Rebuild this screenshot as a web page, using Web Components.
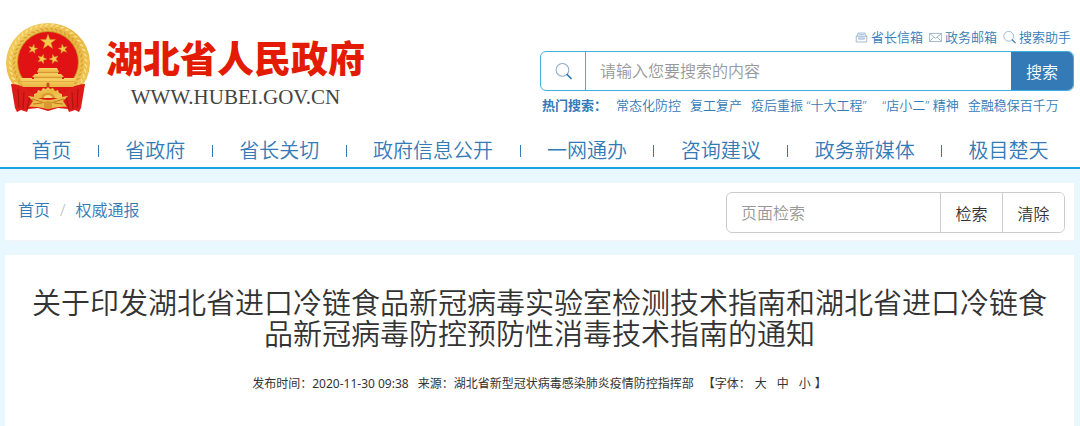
<!DOCTYPE html>
<html lang="zh-CN">
<head>
  <meta charset="utf-8">
  <meta name="viewport" content="width=device-width, initial-scale=1">
  <title>湖北省人民政府</title>
  <style>
    body {
      margin: 0;
      background: #e9f7fe;
      color: #333;
      font-family: "Noto Sans", "Noto Sans CJK SC", sans-serif;
      font-size: 16px;
      font-weight: 350;
      --link: #337ab7;
      --line: #41b0e0;
    }
    a {
      color: var(--link);
      text-decoration: none;
    }
    main {
      display: flex;
      flex-direction: column;
      gap: 14px;
      padding: 14px 6px 0 5px;
    }
  </style>
</head>
<body>
  <site-header>
    <site-brand slot="brand" data-url="WWW.HUBEI.GOV.CN">湖北省人民政府</site-brand>
    <quick-link slot="links" data-icon="box" data-href="#mailbox">省长信箱</quick-link>
    <quick-link slot="links" data-icon="mail" data-href="#mail">政务邮箱</quick-link>
    <quick-link slot="links" data-icon="search" data-href="#helper">搜索助手</quick-link>
    <site-search slot="search" data-placeholder="请输入您要搜索的内容">搜索</site-search>
    <hot-words slot="hot" data-label="热门搜索：">
      <a href="#w1">常态化防控</a>
      <a href="#w2">复工复产</a>
      <a href="#w3">疫后重振 “十大工程”</a>
      <a href="#w4">&nbsp;&nbsp;“店小二” 精神</a>
      <a href="#w5">金融稳保百千万</a>
    </hot-words>
  </site-header>

  <site-nav>
    <nav-item data-href="#home">首页</nav-item>
    <nav-item data-href="#gov">省政府</nav-item>
    <nav-item data-href="#governor">省长关切</nav-item>
    <nav-item data-href="#info">政府信息公开</nav-item>
    <nav-item data-href="#service">一网通办</nav-item>
    <nav-item data-href="#advice">咨询建议</nav-item>
    <nav-item data-href="#media">政务新媒体</nav-item>
    <nav-item data-href="#chutian">极目楚天</nav-item>
  </site-nav>

  <main>
    <crumb-bar>
      <a href="#home">首页</a>
      <a href="#notice">权威通报</a>
      <page-finder slot="tools" data-placeholder="页面检索"></page-finder>
    </crumb-bar>
    <article-head>
      关于印发湖北省进口冷链食品新冠病毒实验室检测技术指南和湖北省进口冷链食品新冠病毒防控预防性消毒技术指南的通知
      <span slot="meta">发布时间：2020-11-30 09:38</span>
      <span slot="meta">来源：湖北省新型冠状病毒感染肺炎疫情防控指挥部</span>
      <font-sizer slot="meta"></font-sizer>
    </article-head>
  </main>

  <script>
    const icons = {
      box: `
        <path d="M3.500 5.500v-3h9v3M1.500 6.500h13v7h-13z"/>
        <path d="M1.500 6.500l2-2M14.500 6.500l-2-2M5 4.500h6M4.500 8.500h7v1.500h-7z"/>`,
      mail: `
        <path d="M.5 3h15v10h-15z"/>
        <path d="M.5 3L8 9l7.500-6M.5 13L6 7.500M15.500 13L10 7.500"/>`,
      search: `
        <circle cx="7" cy="6.500" r="6"/>
        <path d="M11 10.500l4.500 4.500" stroke="#337ab7" stroke-width="1.500"/>`
    };

    function icon(name, size) {
      return `<svg width="${size}" height="${size}" viewBox="0 0 16 16" fill="none" stroke="#8eabcd" aria-hidden="true">${icons[name]}</svg>`;
    }

    function star(cx, cy, r, turn = 0) {
      const points = [];
      for (let i = 0; i < 10; i++) {
        const angle = (i * 36 - 90 + turn) * Math.PI / 180;
        const len = i % 2 ? r * 0.4 : r;
        points.push(`${(cx + len * Math.cos(angle)).toFixed(2)},${(cy + len * Math.sin(angle)).toFixed(2)}`);
      }
      return `<polygon points="${points.join(' ')}"/>`;
    }

    // grains of the wheat wreath, left out at the bottom where the ribbon is
    function grains() {
      let out = '';
      for (let a = 140; a <= 400; a += 8) {
        const rad = a * Math.PI / 180;
        for (const [r, tilt, fill] of [[38, 55, '#f8e08e'], [34, 125, '#d9a238']]) {
          const x = (42 + r * Math.cos(rad)).toFixed(1);
          const y = (40 + r * Math.sin(rad)).toFixed(1);
          out += `<ellipse cx="${x}" cy="${y}" rx="2.200" ry=".8" fill="${fill}" transform="rotate(${a + tilt} ${x} ${y})"/>`;
        }
      }
      return out;
    }

    class GovEmblem extends HTMLElement {
      constructor() {
        super();
        this.attachShadow({ mode: 'open' });
      }

      connectedCallback() {
        this.shadowRoot.innerHTML = `
          <style>
            :host { display: block; flex: none; }
            svg { display: block; }
          </style>
          <svg width="84" height="89" viewBox="0 0 84 89" role="img" aria-label="国徽">
            <defs>
              <linearGradient id="gold" x1="0" y1="0" x2="1" y2="1">
                <stop offset="0" stop-color="#f5d368"/>
                <stop offset=".5" stop-color="#e8b741"/>
                <stop offset="1" stop-color="#f3cb5c"/>
              </linearGradient>
              <linearGradient id="wall" x1="0" y1="0" x2="0" y2="1">
                <stop offset="0" stop-color="#f9d468"/>
                <stop offset="1" stop-color="#eab542"/>
              </linearGradient>
            </defs>
            <ellipse cx="42" cy="40" rx="42" ry="40" fill="url(#gold)"/>
            ${grains()}
            <circle cx="42" cy="39" r="31" fill="#cf9126"/>
            <circle cx="42" cy="39" r="30" fill="#e01214"/>
            <g fill="#f6c94e" stroke="#cf8b1d" stroke-width=".4">
              ${star(42, 19, 8)}
              ${star(27, 26, 5, 12)}
              ${star(57, 26, 5, -12)}
              ${star(36, 36, 5, 18)}
              ${star(48, 36, 5, -18)}
            </g>
            <g fill="url(#wall)">
              <path d="M33 45h18l2 4H31z"/>
              <path d="M32 49h20v3H32z"/>
              <path d="M29 51h26l3 3H26z"/>
              <path d="M28 54h28v4H28z"/>
              <path d="M14 55h12v1h32v-1h12l-3 9H17z"/>
            </g>
            <path d="M31 49.500h22M27 54.500h30" stroke="#bd761a" stroke-width=".6"/>
            <path d="M15 58.500h54" stroke="#d69a30" stroke-width=".6"/>
            <path d="M40.500 64v-3a1.500 1.500 0 0 1 3 0v3z" fill="#c4521a"/>
            <path d="M16 64h52l-6 8-10 4H32l-10-4z" fill="#dc1716"/>
            <path d="M5 61c10 0 17 5 24 11l-2 9c-3 2-5 5-6 8l-6-2-4 2-2-4z" fill="#dd1b18"/>
            <path d="M79 61c-10 0-17 5-24 11l2 9c3 2 5 5 6 8l6-2 4 2 2-4z" fill="#dd1b18"/>
            <path d="M12 66l1 19M18 69l-1 17M24 73l-3 13M72 66l-1 19M66 69l1 17M60 73l3 13" stroke="#a51414"/>
            <path d="M28 71l3-1 1-3 3 1 2-3 3 1 2-2 2 2 3-1 2 3 3-1 1 3 3 1v4H28z" fill="url(#gold)"/>
            <path d="M35 75a7 5 0 0 1 14 0z" fill="#d89a30"/>
            <path d="M38 75a4 3 0 0 1 8 0z" fill="#f7d878"/>
            <path d="M22 86l5-10h30l5 10-10-1-10 3-10-3z" fill="#dc1917"/>
            <path d="M22 73c7 0 13 4 20 4s13-4 20-4l-5 5 4 6c-7-1-12 1-19 2-7-1-12-3-19-2l4-6z" fill="#ecbc4a"/>
            <path d="M26 76c5 1 10 4 16 4s11-3 16-4M27 81l9-1M57 81l-9-1" fill="none" stroke="#bf781d"/>
            <path d="M38 79l4-1 4 1v6l-4 1-4-1z" fill="#d89a30"/>
          </svg>
        `;
      }
    }

    class SiteBrand extends HTMLElement {
      constructor() {
        super();
        this.attachShadow({ mode: 'open' });
      }

      connectedCallback() {
        const url = this.getAttribute('data-url');

        this.shadowRoot.innerHTML = `
          <style>
            :host {
              display: flex;
              align-items: flex-start;
              gap: 16px;
            }
            .text {
              display: flex;
              flex-direction: column;
              align-items: center;
              padding-top: 14px;
            }
            h1 {
              margin: 0;
              color: #e31b00;
              font-size: 37px;
              font-weight: 900;
              line-height: 44px;
              white-space: nowrap;
            }
            .url {
              color: #444;
              font-family: "Liberation Serif", serif;
              font-size: 21px;
              font-weight: 400;
              line-height: 32px;
            }
          </style>
          <gov-emblem></gov-emblem>
          <div class="text">
            <h1><slot></slot></h1>
            <span class="url">${url}</span>
          </div>
        `;
      }
    }

    class SiteHeader extends HTMLElement {
      constructor() {
        super();
        this.attachShadow({ mode: 'open' });
      }

      connectedCallback() {
        this.shadowRoot.innerHTML = `
          <style>
            :host {
              display: block;
              background: #fff;
            }
            header {
              display: flex;
              justify-content: space-between;
              padding: 23px 6px 0;
            }
            .side {
              flex: 0 0 50%;
              display: flex;
              flex-direction: column;
              gap: 4px;
              padding-top: 4px;
            }
            .links {
              display: flex;
              justify-content: flex-end;
              gap: 6px;
              padding-right: 3px;
            }
          </style>
          <header>
            <slot name="brand"></slot>
            <div class="side">
              <div class="links"><slot name="links"></slot></div>
              <slot name="search"></slot>
              <slot name="hot"></slot>
            </div>
          </header>
        `;
      }
    }

    class QuickLink extends HTMLElement {
      constructor() {
        super();
        this.attachShadow({ mode: 'open' });
      }

      connectedCallback() {
        this.shadowRoot.innerHTML = `
          <style>
            :host { display: block; }
            a {
              display: flex;
              align-items: center;
              gap: 3px;
              color: var(--link);
              font-size: 13px;
              line-height: 20px;
              text-decoration: none;
            }
          </style>
          <a href="${this.getAttribute('data-href')}">${icon(this.getAttribute('data-icon'), 13)}<slot></slot></a>
        `;
      }
    }

    class SiteSearch extends HTMLElement {
      constructor() {
        super();
        this.attachShadow({ mode: 'open' });
      }

      connectedCallback() {
        const placeholder = this.getAttribute('data-placeholder');

        this.shadowRoot.innerHTML = `
          <style>
            :host { display: block; }
            form {
              display: flex;
              height: 40px;
              border: 1px solid var(--line);
              border-radius: 6px;
              box-sizing: border-box;
              overflow: hidden;
            }
            label {
              display: grid;
              place-items: center;
              width: 44px;
              border-right: 1px solid var(--line);
            }
            input {
              flex: 1;
              width: 0;
              border: 0;
              padding: 0 14px;
              background: none;
              color: #555;
              font: inherit;
              outline: none;
            }
            input::placeholder { color: #999; }
            button {
              width: 62px;
              border: 0;
              padding: 0;
              background: var(--link);
              color: #fff;
              font: inherit;
            }
          </style>
          <form>
            <label for="q">${icon('search', 17)}</label>
            <input id="q" type="text" aria-label="${placeholder}" placeholder="${placeholder}">
            <button type="button"><slot></slot></button>
          </form>
        `;
      }
    }

    class HotWords extends HTMLElement {
      constructor() {
        super();
        this.attachShadow({ mode: 'open' });
      }

      connectedCallback() {
        this.shadowRoot.innerHTML = `
          <style>
            :host {
              display: flex;
              gap: 9px;
              padding: 0 2px;
              color: var(--link);
              font-size: 13px;
              line-height: 20px;
              white-space: nowrap;
            }
            b { font-weight: 700; }
          </style>
          <b>${this.getAttribute('data-label')}</b>
          <slot></slot>
        `;
      }
    }

    class SiteNav extends HTMLElement {
      constructor() {
        super();
        this.attachShadow({ mode: 'open' });
      }

      connectedCallback() {
        this.shadowRoot.innerHTML = `
          <style>
            :host {
              display: block;
              border-bottom: 2px solid #1ba1e2;
              background: #fff;
            }
            nav {
              display: flex;
              padding: 22px 5px 2px;
            }
          </style>
          <nav><slot></slot></nav>
        `;
      }
    }

    class NavItem extends HTMLElement {
      constructor() {
        super();
        this.attachShadow({ mode: 'open' });
      }

      connectedCallback() {
        this.shadowRoot.innerHTML = `
          <style>
            :host {
              flex: 1 1 auto;
              display: flex;
              align-items: center;
            }
            :host(:not(:first-child))::before {
              content: "";
              width: 1px;
              height: 12px;
              background: var(--link);
            }
            a {
              flex: 1;
              color: var(--link);
              font-size: 20px;
              line-height: 28px;
              text-align: center;
              text-decoration: none;
              white-space: nowrap;
            }
          </style>
          <a href="${this.getAttribute('data-href')}"><slot></slot></a>
        `;
      }
    }

    class CrumbBar extends HTMLElement {
      constructor() {
        super();
        this.attachShadow({ mode: 'open' });
      }

      connectedCallback() {
        this.shadowRoot.innerHTML = `
          <style>
            :host {
              display: flex;
              justify-content: space-between;
              align-items: flex-start;
              border-bottom: 1px solid #f3f3f3;
              padding: 9px 9px 7px 13px;
              background: #fff;
            }
            nav {
              display: flex;
              padding-top: 6px;
              line-height: 24px;
            }
            ::slotted(a:not(:first-child))::before {
              content: "/";
              padding: 0 10px;
              color: #bbb;
            }
          </style>
          <nav><slot></slot></nav>
          <slot name="tools"></slot>
        `;
      }
    }

    class PageFinder extends HTMLElement {
      constructor() {
        super();
        this.attachShadow({ mode: 'open' });
      }

      connectedCallback() {
        const placeholder = this.getAttribute('data-placeholder');

        this.shadowRoot.innerHTML = `
          <style>
            :host { display: block; flex: 0 1 339px; }
            form {
              display: flex;
              height: 41px;
              border: 1px solid #ccc;
              border-radius: 6px;
              box-sizing: border-box;
              overflow: hidden;
            }
            input {
              flex: 1;
              width: 0;
              border: 0;
              padding: 0 14px;
              background: none;
              font: inherit;
              outline: none;
            }
            input::placeholder { color: #999; }
            button {
              width: 62px;
              border: 0;
              border-left: 1px solid #ccc;
              padding: 0;
              background: #fff;
              color: #333;
              font: inherit;
            }
          </style>
          <form>
            <input type="text" aria-label="${placeholder}" placeholder="${placeholder}">
            <button type="button">检索</button>
            <button type="reset">清除</button>
          </form>
        `;
      }
    }

    class ArticleHead extends HTMLElement {
      constructor() {
        super();
        this.attachShadow({ mode: 'open' });
      }

      connectedCallback() {
        this.shadowRoot.innerHTML = `
          <style>
            :host {
              display: block;
              padding: 32px 20px 48px;
              background: #fff;
            }
            h2 {
              margin: 0;
              font-size: 29px;
              font-weight: inherit;
              line-height: 31px;
              text-align: center;
            }
            .meta {
              display: flex;
              justify-content: center;
              gap: 9px;
              padding-top: 25px;
              font-size: 12px;
              font-weight: 400;
              line-height: 20px;
            }
          </style>
          <h2><slot></slot></h2>
          <div class="meta"><slot name="meta"></slot></div>
        `;
      }
    }

    class FontSizer extends HTMLElement {
      constructor() {
        super();
        this.attachShadow({ mode: 'open' });
      }

      connectedCallback() {
        this.shadowRoot.innerHTML = `
          <style>
            :host { display: flex; }
            div { display: flex; gap: 10px; padding: 0 4px; }
            button {
              border: 0;
              padding: 0;
              background: none;
              color: inherit;
              font: inherit;
            }
          </style>
          <span>【字体：</span>
          <div>
            <button type="button">大</button>
            <button type="button">中</button>
            <button type="button">小</button>
          </div>
          <span>】</span>
        `;
      }
    }

    customElements.define('gov-emblem', GovEmblem);
    customElements.define('site-brand', SiteBrand);
    customElements.define('site-header', SiteHeader);
    customElements.define('quick-link', QuickLink);
    customElements.define('site-search', SiteSearch);
    customElements.define('hot-words', HotWords);
    customElements.define('site-nav', SiteNav);
    customElements.define('nav-item', NavItem);
    customElements.define('crumb-bar', CrumbBar);
    customElements.define('page-finder', PageFinder);
    customElements.define('article-head', ArticleHead);
    customElements.define('font-sizer', FontSizer);
  </script>
</body>
</html>
